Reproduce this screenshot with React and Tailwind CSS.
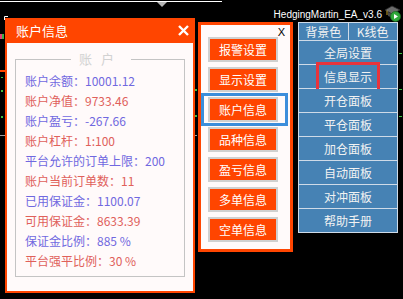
const font = { fontFamily: '"Noto Sans CJK SC", "Noto Sans", sans-serif' };

const accountRows = [
  ["账户余额：", "10001.12"],
  ["账户净值：", "9733.46"],
  ["账户盈亏：", "-267.66"],
  ["账户杠杆：", "1:100"],
  ["平台允许的订单上限：", "200"],
  ["账户当前订单数：", "11"],
  ["已用保证金：", "1100.07"],
  ["可用保证金：", "8633.39"],
  ["保证金比例：", "885 %"],
  ["平台强平比例：", "30 %"],
];

const menuItems = ["报警设置", "显示设置", "账户信息", "品种信息", "盈亏信息", "多单信息", "空单信息"];

const sideItems = ["全局设置", "信息显示", "开仓面板", "平仓面板", "加仓面板", "自动面板", "对冲面板", "帮助手册"];

// chart scraps peeking out between the windows
const ChartBits = () => (
  <svg className="absolute inset-0" width="403" height="299" viewBox="0 0 403 299">
    <rect x="0" y="1" width="222" height="1" fill="#ffffff" />
    <path d="M157 2 L167 2 L162 7 Z" fill="#b4b4b4" />
    <path d="M4.5 20 L4.5 16.5 L8 16.5" stroke="#ffffff" fill="none" />
    <rect x="0" y="34" width="2" height="5" fill="#e0407a" />
    <rect x="2" y="34" width="2" height="5" fill="#3cb043" />
    <rect x="0" y="70" width="5" height="2" fill="#ff4500" />
    <g fill="#3cc040">
      <rect x="1" y="77" width="2" height="1" />
      <rect x="1" y="90" width="2" height="2" />
      <rect x="1" y="116" width="2" height="2" />
      <rect x="195" y="89" width="2" height="2" />
      <rect x="195" y="115" width="2" height="2" />
      <rect x="399" y="53" width="3" height="1" />
      <rect x="399" y="89" width="3" height="1" />
      <rect x="399" y="116" width="3" height="1" />
    </g>
    <rect x="0" y="135" width="5" height="1" fill="#a0a0a0" />
    <rect x="195" y="135" width="2" height="1" fill="#a0a0a0" />
  </svg>
);

const CapIcon = () => (
  <svg width="17" height="18" viewBox="0 0 17 18">
    <path d="M1 6 L8 2 L16 6 L8 10 Z" fill="#6b6b6b" stroke="#2a2a2a" strokeWidth="0.8" />
    <path d="M4 8 L4 12 Q8 14 12 12 L12 8 L8 10 Z" fill="#4a4a4a" />
    <path d="M3 6.5 L3 11" stroke="#c9a227" strokeWidth="1" />
    <circle cx="11.5" cy="12.5" r="5" fill="#2fa83a" stroke="#1a6a22" strokeWidth="0.8" />
    <path d="M10 10 L14 12.5 L10 15 Z" fill="#ffffff" />
  </svg>
);

const AccountPanel = () => (
  <div className="shrink-0 w-[190px] h-[275px] bg-[#ff4500] flex flex-col">
    <div className="h-[25px] flex items-center justify-between pl-[11px] pr-[6px] text-white text-[13px]">
      <span>账户信息</span>
      <svg width="11" height="11" viewBox="0 0 11 11">
        <path d="M1 1 L10 10 M10 1 L1 10" stroke="#ffffff" strokeWidth="2.4" />
      </svg>
    </div>
    <div className="flex-1 mx-[2px] mb-[2px] bg-[#fffafa] pt-[16px] pl-[8px]">
      <div className="relative w-[170px] h-[218px] border border-[#c4c4c4] pt-[11px] pl-[9px]">
        <div className="absolute left-[55px] -top-[10px] px-[8px] bg-[#fffafa] text-[13px] leading-[18px] text-[#d2d2d2] tracking-[9px]">
          账户
        </div>
        <div className="flex flex-col">
          {accountRows.map(([label, value], i) => (
            <div
              key={label}
              className={`h-[20px] leading-[20px] text-[12px] whitespace-nowrap ${i % 2 === 0 ? "text-[#7068e0]" : "text-[#e0605a]"}`}
            >
              {label}
              {value}
            </div>
          ))}
        </div>
      </div>
    </div>
  </div>
);

const MenuPanel = () => (
  <div className="shrink-0 mt-[4px] w-[95px] h-[230px] border-[3px] border-[#ff4500] bg-[#fffafa] flex flex-col">
    <div className="flex justify-end pr-[5px] h-[12px]">
      <span className="text-[11px] leading-[14px] text-black" style={{ fontFamily: '"Liberation Sans", sans-serif' }}>
        X
      </span>
    </div>
    <div className="flex flex-col gap-[5px] pl-[7px]">
      {menuItems.map((item) => (
        <div
          key={item}
          className="relative w-[70px] h-[25px] border-2 border-[#d0d0d0] bg-[#ff4500] text-white text-[12px] flex items-center justify-center"
        >
          {item}
          {item === "账户信息" && (
            <div className="absolute -left-[9px] -right-[12px] -top-[6px] -bottom-[6px] border-[3px] border-[#3c8edb]" />
          )}
        </div>
      ))}
    </div>
  </div>
);

const SidePanel = () => (
  <div className="w-[100px] bg-[#cfdbe8] p-px flex flex-col gap-px">
    <div className="flex gap-px h-[17px]">
      <div className="flex-1 bg-[#4682b4] text-[#f2f2f2] text-[12px] flex items-center justify-center">背景色</div>
      <div className="flex-1 bg-[#4682b4] text-[#f2f2f2] text-[12px] flex items-center justify-center">K线色</div>
    </div>
    {sideItems.map((item) => (
      <div key={item} className="relative h-[23px] bg-[#4682b4] text-[#f2f2f2] text-[12px] flex items-center justify-center">
        {item}
        {item === "信息显示" && (
          <div className="absolute left-[17px] right-[17px] -top-[3px] -bottom-[4px] border-[3px] border-[#e8343c]" />
        )}
      </div>
    ))}
  </div>
);

export default function App() {
  return (
    <div className="relative w-[403px] h-[299px] bg-black overflow-hidden" style={font}>
      <ChartBits />
      <div className="relative flex items-start pt-[18px] pl-[5px] gap-[3px]">
        <AccountPanel />
        <MenuPanel />
        <div className="shrink-0 w-[100px] flex flex-col items-end -mt-[15px] ml-[2px]">
          <div className="flex items-center gap-[2px] h-[19px] -mr-[3px] whitespace-nowrap">
            <span className="text-white text-[10px] leading-[14px] mt-[5px]" style={{ fontFamily: '"Liberation Sans", sans-serif' }}>
              HedgingMartin_EA_v3.6
            </span>
            <CapIcon />
          </div>
          <SidePanel />
        </div>
      </div>
    </div>
  );
}
